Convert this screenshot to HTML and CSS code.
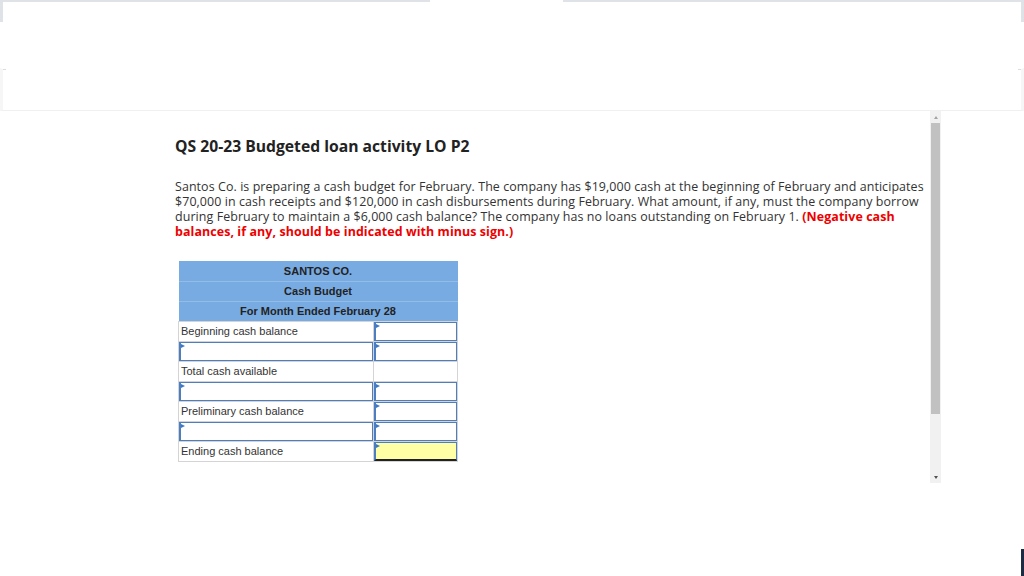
FILE: index.html
```html
<!DOCTYPE html>
<html>
<head>
<meta charset="utf-8">
<link rel="stylesheet" href="styles.css">
</head>
<body>
<div class="page">
  <div class="topbar">
    <div class="seg-left"></div>
    <div class="seg-gap"></div>
    <div class="seg-right"></div>
  </div>
  <div class="spacer"></div>
  <div class="subbar"></div>
  <div class="main">
    <div class="content">
      <h1 class="title">QS 20-23 Budgeted loan activity LO P2</h1>
      <p class="question">Santos Co. is preparing a cash budget for February. The company has $19,000 cash at the beginning of February and anticipates $70,000 in cash receipts and $120,000 in cash disbursements during February. What amount, if any, must the company borrow during February to maintain a $6,000 cash balance? The company has no loans outstanding on February 1. <strong class="red">(Negative cash balances, if any, should be indicated with minus sign.)</strong></p>
      <table class="budget">
        <tr class="hd"><td colspan="2">SANTOS CO.</td></tr>
        <tr class="hd"><td colspan="2">Cash Budget</td></tr>
        <tr class="hd last"><td colspan="2">For Month Ended February 28</td></tr>
        <tr><td class="lbl">Beginning cash balance</td><td class="val"><div class="inp"></div></td></tr>
        <tr><td class="lbl pad"><div class="inp"></div></td><td class="val"><div class="inp"></div></td></tr>
        <tr><td class="lbl">Total cash available</td><td class="val"></td></tr>
        <tr><td class="lbl pad"><div class="inp"></div></td><td class="val"><div class="inp"></div></td></tr>
        <tr><td class="lbl">Preliminary cash balance</td><td class="val"><div class="inp"></div></td></tr>
        <tr><td class="lbl pad"><div class="inp"></div></td><td class="val"><div class="inp"></div></td></tr>
        <tr><td class="lbl">Ending cash balance</td><td class="val"><div class="inp yellow"></div></td></tr>
      </table>
    </div>
    <div class="scrollbar">
      <div class="arrow up"></div>
      <div class="thumb"></div>
      <div class="track"></div>
      <div class="arrow down"></div>
    </div>
  </div>
  <div class="corner"></div>
</div>
</body>
</html>
```
FILE: styles.css
```css
html, body {
  margin: 0;
  padding: 0;
  background: #fff;
}
.page {
  position: relative;
  width: 1024px;
  height: 576px;
  overflow: hidden;
}
.topbar {
  display: flex;
  height: 22px;
}
.seg-left {
  width: 430px;
  border-top: 2px solid #dfe3e8;
  border-left: 3px solid #dfe3e8;
  box-sizing: border-box;
}
.seg-gap {
  width: 133px;
}
.seg-right {
  flex: 1;
  border-top: 2px solid #dfe3e8;
  border-right: 3px solid #dfe3e8;
  box-sizing: border-box;
}
.spacer {
  height: 46px;
}
.subbar {
  height: 43px;
  border-left: 3px solid #f6f6f7;
  border-right: 3px solid #f6f6f7;
  border-top: 1px solid transparent;
  border-bottom: 1px solid #f0f0f0;
  box-sizing: border-box;
  background:
    linear-gradient(#d8dbe0, #d8dbe0) left top / 3px 1px no-repeat,
    linear-gradient(#d8dbe0, #d8dbe0) right top / 3px 1px no-repeat;
}
.main {
  display: flex;
  align-items: flex-start;
}
.content {
  width: 930px;
  box-sizing: border-box;
  padding: 25px 0 0 175px;
}
.title {
  margin: 0;
  font-family: "Open Sans", sans-serif;
  font-weight: 700;
  font-size: 15.7px;
  line-height: 20px;
  color: #222;
}
.question {
  margin: 23px 0 0 0;
  width: 752px;
  font-family: "Open Sans", sans-serif;
  font-size: 12.45px;
  line-height: 15px;
  letter-spacing: 0.08px;
  color: #333;
}
.red {
  color: #ee0000;
  font-weight: 700;
}
.budget {
  margin: 22px 0 0 3px;
  border-collapse: collapse;
  font-family: "Liberation Sans", Arial, sans-serif;
  font-size: 11px;
  color: #222;
}
.budget td {
  height: 20px;
  padding: 0;
  box-sizing: border-box;
}
.hd td {
  height: 20px;
  background: #79abe3;
  text-align: center;
  font-weight: 700;
  width: 279px;
  border-bottom: 1px solid #95bce6;
}
.hd.last td {
  border-bottom: none;
}
.lbl {
  width: 195px;
  border: 1px solid #d4d4d4;
  padding-left: 2px !important;
  color: #333;
}
.lbl.pad {
  padding: 0 !important;
}
.val {
  width: 84px;
  border: 1px solid #d4d4d4;
}
.inp {
  position: relative;
  height: 19px;
  box-sizing: border-box;
  border: 1px solid #4d7fc0;
  border-left-width: 2px;
  background: #fff;
}
.inp::before {
  content: "";
  position: absolute;
  left: 0;
  top: 1px;
  border-left: 4px solid #3c78c8;
  border-top: 2px solid transparent;
  border-bottom: 2px solid transparent;
}
.inp.yellow {
  background: #ffffa6;
  border-bottom: 2px solid #222;
}
.scrollbar {
  width: 11px;
  height: 372px;
  background: #f1f1f1;
  display: flex;
  flex-direction: column;
}
.arrow {
  height: 12px;
  display: flex;
  justify-content: center;
  align-items: center;
}
.arrow.up::before {
  content: "";
  border-left: 2px solid transparent;
  border-right: 2px solid transparent;
  border-bottom: 3px solid #a3a3a3;
}
.arrow.down::before {
  content: "";
  border-left: 2px solid transparent;
  border-right: 2px solid transparent;
  border-top: 3px solid #505050;
}
.thumb {
  height: 291px;
  margin: 0 1px;
  background: #c1c1c1;
}
.track {
  flex: 1;
}
.corner {
  position: absolute;
  right: 0;
  bottom: 0;
  width: 3px;
  height: 27px;
  background: #1c2a44;
}
```
